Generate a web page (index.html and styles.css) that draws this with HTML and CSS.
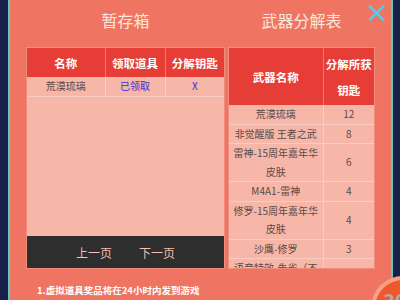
FILE: index.html
```html
<!DOCTYPE html>
<html lang="zh-CN">
<head>
    <meta charset="UTF-8">
    <meta name="viewport" content="width=device-width, initial-scale=1.0">
    <title>暂存箱</title>
    <link rel="stylesheet" href="styles.css">
</head>
<body>

    <div class="panel">
        <button class="close-btn" aria-label="关闭">
            <svg width="17" height="16" viewBox="0 0 17 16">
                <path d="M2 1.5 L15 14.5 M15 1.5 L2 14.5" stroke="#5ec6e6" stroke-width="2.6" stroke-linecap="square" fill="none"/>
            </svg>
        </button>

        <div class="columns">
            <!-- 暂存箱 -->
            <section class="col col-left">
                <h2 class="title">暂存箱</h2>
                <div class="box">
                    <div class="box-body">
                        <table class="grid">
                            <colgroup>
                                <col class="w-name">
                                <col class="w-get">
                                <col>
                            </colgroup>
                            <thead>
                                <tr><th>名称</th><th>领取道具</th><th>分解钥匙</th></tr>
                            </thead>
                            <tbody>
                                <tr><td>荒漠琉璃</td><td class="link">已领取</td><td class="link">X</td></tr>
                            </tbody>
                        </table>
                    </div>
                    <div class="pager">
                        <span>上一页</span>
                        <span>下一页</span>
                    </div>
                </div>
                <p class="note">1.虚拟道具奖品将在24小时内发到游戏中</p>
            </section>

            <!-- 武器分解表 -->
            <section class="col col-right">
                <h2 class="title">武器分解表</h2>
                <div class="box box-scroll">
                    <table class="grid">
                        <colgroup>
                            <col class="w-weapon">
                            <col>
                        </colgroup>
                        <thead>
                            <tr><th>武器名称</th><th class="wrap">分解所获钥匙</th></tr>
                        </thead>
                        <tbody>
                            <tr><td>荒漠琉璃</td><td>12</td></tr>
                            <tr><td>非觉醒版 王者之武</td><td>8</td></tr>
                            <tr><td>雷神-15周年嘉年华皮肤</td><td>6</td></tr>
                            <tr><td>M4A1-雷神</td><td>4</td></tr>
                            <tr><td>修罗-15周年嘉年华皮肤</td><td>4</td></tr>
                            <tr><td>沙鹰-修罗</td><td>3</td></tr>
                            <tr><td>语音特效-朱雀（不可交易）</td><td>3</td></tr>
                        </tbody>
                    </table>
                </div>
            </section>
        </div>
    </div>

    <div class="float-ball"><span>30</span></div>

</body>
</html>
```

FILE: styles.css
```css
body {
    margin: 0;
    height: 300px;
    overflow: hidden;
    background: #17214a;
    font-family: "Noto Sans CJK SC", "Noto Sans", sans-serif;
}
.panel {
    position: relative;
    margin: 0 7px 0 8px;
    height: 300px;
    background: #ef7562;
    border-left: 2px solid #63c6c0;
    border-right: 2px solid #63c6c0;
    box-sizing: border-box;
}
.close-btn {
    position: absolute;
    top: 5px;
    right: 6px;
    padding: 0;
    border: none;
    background: none;
    cursor: pointer;
}
.columns {
    display: flex;
    gap: 5px;
    padding: 0 16px 0 17px;
}
.col {
    display: flex;
    flex-direction: column;
}
.col-left {
    width: 197px;
}
.col-right {
    width: 145px;
}
.title {
    margin: 0;
    padding: 8px 0 0;
    height: 48px;
    box-sizing: border-box;
    font-size: 16px;
    line-height: 24px;
    font-weight: normal;
    color: #fde6dd;
    text-align: center;
}
.box {
    height: 220px;
    display: flex;
    flex-direction: column;
    background: #f6b7a9;
    outline: 1px solid rgba(255, 255, 255, 0.18);
}
.box-body {
    flex: 1;
}
.box-scroll {
    overflow: hidden;
}
.grid {
    width: 100%;
    border-collapse: collapse;
    table-layout: fixed;
}
.w-name { width: 78px; }
.w-get { width: 60px; }
.w-weapon { width: 94px; }
.grid th {
    background: #e63d36;
    color: #fff;
    font-size: 11.5px;
    font-weight: bold;
    line-height: 26px;
    padding: 2px 0 1px;
    white-space: nowrap;
    border-left: 1px solid rgba(255, 255, 255, 0.3);
}
.grid th.wrap {
    white-space: normal;
    padding: 3px 2px 2px;
}
.grid th:first-child,
.grid td:first-child {
    border-left: none;
}
.grid td {
    font-size: 10px;
    line-height: 18.5px;
    color: #5a4a48;
    text-align: center;
    padding: 0 2px;
    border-left: 1px solid #f9cdc3;
    border-bottom: 1px solid #f9cdc3;
}
.grid td.link {
    color: #3b2bd4;
}
.pager {
    height: 32px;
    background: #2e2e2e;
    display: flex;
    justify-content: center;
    align-items: center;
    gap: 27px;
    color: #f3bfb2;
    font-size: 12px;
}
.note {
    width: 166px;
    margin: 15px 0 0;
    padding: 0 0 0 10px;
    font-size: 9.5px;
    line-height: 14px;
    font-weight: bold;
    color: #fff;
}
.float-ball {
    position: fixed;
    left: 371px;
    top: 276px;
    width: 64px;
    height: 64px;
    border-radius: 50%;
    box-sizing: border-box;
    border: 4px solid rgba(255, 230, 225, 0.5);
    background: #f0582c;
    color: #b9a9a6;
    font-size: 20px;
    font-weight: bold;
    padding: 6px 0 0 8px;
}
```
